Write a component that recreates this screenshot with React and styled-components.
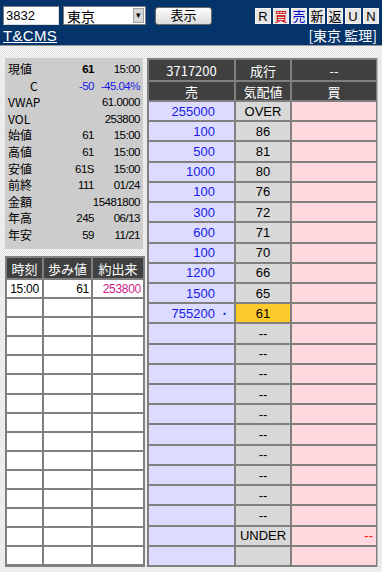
import React from "react";
import styled, { createGlobalStyle } from "styled-components";

const GlobalStyle = createGlobalStyle`
  html, body { margin: 0; padding: 0; }
  body {
    font-family: "Liberation Sans", "Noto Sans CJK JP", sans-serif;
    font-size: 13px;
  }
`;

const info = [
  { label: "現値", value: "61", time: "15:00", bold: true },
  { label: "C", value: "-50", time: "-45.04%", blue: true, indent: true },
  { label: "VWAP", value: "", time: "61.0000" },
  { label: "VOL", value: "", time: "253800" },
  { label: "始値", value: "61", time: "15:00" },
  { label: "高値", value: "61", time: "15:00" },
  { label: "安値", value: "61S", time: "15:00" },
  { label: "前終", value: "111", time: "01/24" },
  { label: "金額", value: "", time: "15481800" },
  { label: "年高", value: "245", time: "06/13" },
  { label: "年安", value: "59", time: "11/21" },
];

const book = [
  { sell: "255000", price: "OVER" },
  { sell: "100", price: "86" },
  { sell: "500", price: "81" },
  { sell: "1000", price: "80" },
  { sell: "100", price: "76" },
  { sell: "300", price: "72" },
  { sell: "600", price: "71" },
  { sell: "100", price: "70" },
  { sell: "1200", price: "66" },
  { sell: "1500", price: "65" },
  { sell: "755200", price: "61", current: true, mark: true },
  ...Array.from({ length: 10 }, () => ({ sell: "", price: "--" })),
  { sell: "", price: "UNDER", buy: "--" },
  { sell: "", price: "" },
];

const codeButtons = [
  { t: "R" },
  { t: "買", color: "#d00000" },
  { t: "売", color: "#0000d0" },
  { t: "新" },
  { t: "返" },
  { t: "U" },
  { t: "N" },
];

export default function App() {
  return (
    <Page>
      <GlobalStyle />
      <Header>
        <TopRow>
          <CodeInput>3832</CodeInput>
          <Select>
            <span>東京</span>
            <SelectArrow>▾</SelectArrow>
          </Select>
          <ShowButton>表示</ShowButton>
          <CodeButtons>
            {codeButtons.map((b) => (
              <CodeButton key={b.t} $color={b.color}>
                {b.t}
              </CodeButton>
            ))}
          </CodeButtons>
        </TopRow>
        <NameRow>
          <NameLink>T&amp;CMS</NameLink>
          <Market>[東京 監理]</Market>
        </NameRow>
      </Header>

      <Main>
        <LeftColumn>
          <InfoPanel>
            {info.map((r) => (
              <InfoRow key={r.label}>
                <InfoLabel $indent={r.indent}>{r.label}</InfoLabel>
                <InfoValue $bold={r.bold} $blue={r.blue}>
                  {r.value}
                </InfoValue>
                <InfoValue $blue={r.blue}>{r.time}</InfoValue>
              </InfoRow>
            ))}
          </InfoPanel>

          <TradeGrid>
            <DarkCell>時刻</DarkCell>
            <DarkCell>歩み値</DarkCell>
            <DarkCell>約出来</DarkCell>
            <TradeCell $align="center">15:00</TradeCell>
            <TradeCell>61</TradeCell>
            <TradeCell $color="#cc2288">253800</TradeCell>
            {Array.from({ length: 14 * 3 }, (_, i) => (
              <TradeCell key={i} />
            ))}
          </TradeGrid>
        </LeftColumn>

        <Board>
          <DarkCell>3717200</DarkCell>
          <DarkCell>成行</DarkCell>
          <DarkCell>--</DarkCell>
          <DarkCell>売</DarkCell>
          <DarkCell>気配値</DarkCell>
          <DarkCell>買</DarkCell>
          {book.map((r, i) => (
            <React.Fragment key={i}>
              <SellCell>
                {r.sell}
                <Mark>{r.mark ? "・" : ""}</Mark>
              </SellCell>
              <PriceCell $current={r.current}>{r.price}</PriceCell>
              <BuyCell>{r.buy}</BuyCell>
            </React.Fragment>
          ))}
        </Board>
      </Main>
    </Page>
  );
}

const Page = styled.div`
  width: 382px;
  height: 572px;
  overflow: hidden;
  background-color: #ececec;
  background-image: repeating-conic-gradient(#f6f6f6 0 25%, #e2e2e2 0 50%);
  background-size: 2px 2px;
`;

const Header = styled.div`
  height: 46px;
  background: #05346a;
  border-bottom: 1px solid #9a9a9a;
  box-sizing: border-box;
  padding: 5px 3px 0 3px;
`;

const TopRow = styled.div`
  display: flex;
  align-items: center;
  height: 21px;
`;

const CodeInput = styled.div`
  width: 56px;
  height: 19px;
  box-sizing: border-box;
  background: #fff;
  border: 1px solid #7a7a7a;
  border-right-color: #ddd;
  border-bottom-color: #ddd;
  font-size: 13px;
  line-height: 17px;
  padding-left: 2px;
  color: #000;
`;

const Select = styled.div`
  width: 83px;
  height: 19px;
  margin-left: 4px;
  box-sizing: border-box;
  background: #fff;
  border: 1px solid #7a7a7a;
  display: flex;
  align-items: center;
  justify-content: space-between;
  padding-left: 3px;
  font-size: 14px;
  color: #000;
`;

const SelectArrow = styled.div`
  width: 11px;
  height: 15px;
  margin-right: 1px;
  background: #d8d8d8;
  border: 1px solid #a0a0a0;
  box-sizing: border-box;
  font-size: 9px;
  line-height: 13px;
  text-align: center;
  color: #000;
`;

const ShowButton = styled.div`
  width: 57px;
  height: 18px;
  margin-left: 9px;
  box-sizing: border-box;
  border: 1px solid #6a6a6a;
  border-radius: 3px;
  background: linear-gradient(#fdfdfd, #dcdcdc);
  font-size: 13px;
  line-height: 16px;
  text-align: center;
  color: #000;
`;

const CodeButtons = styled.div`
  margin-left: auto;
  display: flex;
  gap: 2px;
`;

const CodeButton = styled.div`
  width: 16px;
  height: 16px;
  background: #e6e6e6;
  border: 1px solid #f4f4f4;
  box-sizing: border-box;
  font-size: 13px;
  line-height: 15px;
  text-align: center;
  color: ${(p) => p.$color || "#000"};
`;

const NameRow = styled.div`
  display: flex;
  align-items: center;
  justify-content: space-between;
  height: 16px;
  margin-top: 1px;
`;

const NameLink = styled.div`
  color: #fff;
  font-size: 15px;
  text-decoration: underline;
  letter-spacing: 0.3px;
`;

const Market = styled.div`
  color: #fff;
  font-size: 14px;
  font-family: "Noto Sans CJK JP", sans-serif;
  margin-right: 2px;
`;

const Main = styled.div`
  display: flex;
  gap: 2px;
  padding: 12px 0 0 5px;
`;

const LeftColumn = styled.div`
  width: 140px;
  display: flex;
  flex-direction: column;
  gap: 7px;
`;

const InfoPanel = styled.div`
  width: 138px;
  height: 191px;
  box-sizing: border-box;
  background: #cccccc;
  padding: 3px 3px 0 3px;
`;

const InfoRow = styled.div`
  display: grid;
  grid-template-columns: 34px 52px 46px;
  height: 16.6px;
  line-height: 16.6px;
  font-size: 11.5px;
  letter-spacing: -0.5px;
  color: #000;
`;

const InfoLabel = styled.div`
  font-family: "Noto Sans CJK JP", sans-serif;
  font-size: 12px;
  letter-spacing: 0;
  white-space: nowrap;
  padding-left: ${(p) => (p.$indent ? "22px" : "0")};
`;

const InfoValue = styled.div`
  display: flex;
  justify-content: flex-end;
  white-space: nowrap;
  font-weight: ${(p) => (p.$bold ? 700 : 400)};
  color: ${(p) => (p.$blue ? "#1a1ae6" : "#000")};
`;

const TradeGrid = styled.div`
  display: grid;
  grid-template-columns: 35px 47px 50px;
  grid-template-rows: 20px repeat(15, 17.1px);
  gap: 2px;
  padding: 2px;
  width: 140px;
  height: 311px;
  box-sizing: border-box;
  background: #808080;
`;

const DarkCell = styled.div`
  background: #404040;
  color: #fff;
  font-family: "Noto Sans CJK JP", sans-serif;
  font-size: 13px;
  display: flex;
  align-items: center;
  justify-content: center;
  white-space: nowrap;
`;

const TradeCell = styled.div`
  background: #fff;
  color: ${(p) => p.$color || "#000"};
  font-size: 12px;
  letter-spacing: -0.3px;
  display: flex;
  align-items: center;
  justify-content: ${(p) => (p.$align === "center" ? "center" : "flex-end")};
  padding-right: ${(p) => (p.$align === "center" ? "0" : "2px")};
`;

const Board = styled.div`
  display: grid;
  grid-template-columns: 85px 54px 84px;
  grid-template-rows: 20px 18px repeat(23, 1fr);
  gap: 2px;
  padding: 2px;
  width: 231px;
  height: 509px;
  box-sizing: border-box;
  background: #808080;
  border-right: 1px solid #bdbdbd;
`;

const SellCell = styled.div`
  background: #dcdcff;
  color: #1a1ae6;
  font-size: 13px;
  display: flex;
  align-items: center;
  justify-content: flex-end;
`;

const Mark = styled.span`
  width: 19px;
  text-align: center;
  font-size: 11px;
`;

const PriceCell = styled.div`
  background: ${(p) => (p.$current ? "#fdca2c" : "#d8d8d8")};
  color: #000;
  font-size: 13px;
  display: flex;
  align-items: center;
  justify-content: center;
`;

const BuyCell = styled.div`
  background: #ffd9dd;
  color: #ff1010;
  font-size: 13px;
  display: flex;
  align-items: center;
  justify-content: flex-end;
  padding-right: 3px;
`;
